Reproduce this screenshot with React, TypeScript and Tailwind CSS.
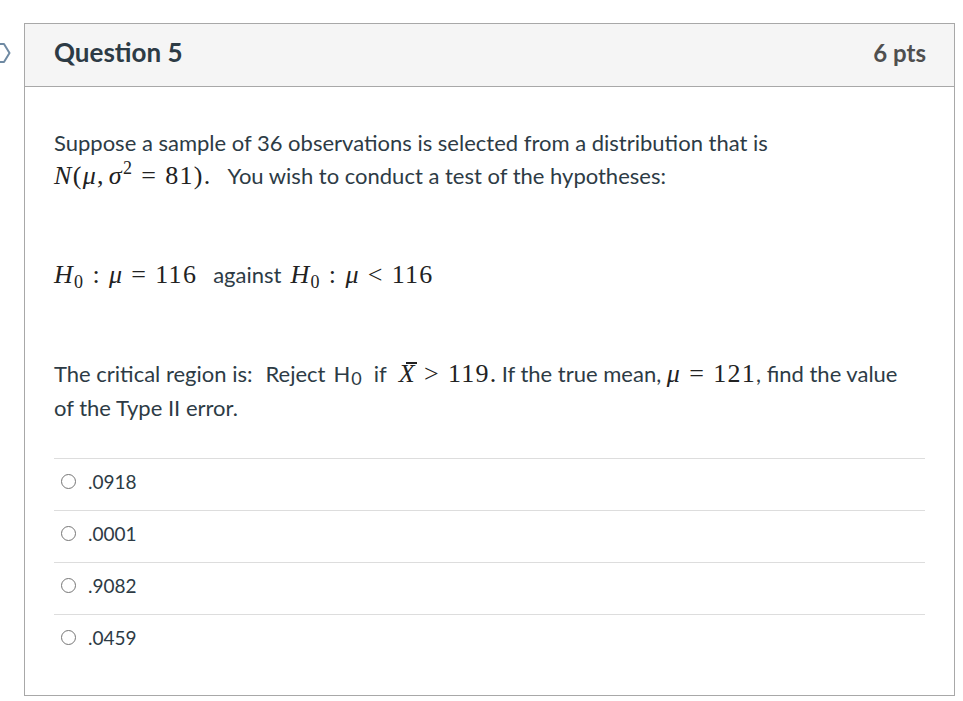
import React from "react";

const M: React.FC<{ children: React.ReactNode; className?: string }> = ({ children, className }) => (
  <span className={`font-['Liberation_Serif',serif] text-[26px] tracking-[1.3px] text-[#222] ${className ?? ""}`}>{children}</span>
);
const I: React.FC<{ children: React.ReactNode }> = ({ children }) => <i className="italic">{children}</i>;
const S: React.FC<{ w: string }> = ({ w }) => <span className={`inline-block ${w}`} />;

const answers = [".0918", ".0001", ".9082", ".0459"];

export default function App() {
  return (
    <div className="relative w-[963px] h-[701px] bg-white font-['Lato',sans-serif] text-[#2d3b45]">
      <svg className="absolute left-[-6px] top-[41px]" width="18" height="24" viewBox="0 0 18 24">
        <path d="M1 3 H10 L15.5 12 L10 21 H1" fill="none" stroke="#6f8aa3" strokeWidth="2" strokeLinejoin="round" />
      </svg>
      <div className="absolute left-[24px] top-[23px] w-[931px] h-[673px] border border-[#a8a8a8] flex flex-col">
        <div className="h-[63px] shrink-0 bg-[#f5f5f5] border-b border-[#a8a8a8] flex items-center justify-between pl-[29px] pr-[28px] pb-[5px]">
          <span className="text-[26px] font-bold text-[#2d3b45]">Question 5</span>
          <span className="text-[24px] font-bold text-[#4f4f4f]">6 pts</span>
        </div>
        <div className="px-[29px] pt-[39px] text-[22px] leading-[33px]">
          <p>Suppose a sample of 36 observations is selected from a distribution that is</p>
          <p>
            <M>
              <I>N</I>(<I>μ</I>,<S w="w-[4px]" /><I>σ</I>
              <sup className="text-[18px] relative top-[-10px] align-baseline">2</sup>
              <S w="w-[8px]" />=<S w="w-[8px]" />81).
            </M>
            <S w="w-[16px]" />You wish to conduct a test of the hypotheses:
          </p>
          <p>&nbsp;</p>
          <p className="mt-[33px]">
            <M>
              <I>H</I>
              <sub className="text-[18px]">0</sub>
              <S w="w-[8px]" />:<S w="w-[8px]" /><I>μ</I>
              <S w="w-[8px]" />=<S w="w-[8px]" />116
            </M>
            <S w="w-[16px]" />against<S w="w-[9px]" />
            <M>
              <I>H</I>
              <sub className="text-[18px]">0</sub>
              <S w="w-[8px]" />:<S w="w-[8px]" /><I>μ</I>
              <S w="w-[8px]" />&lt;<S w="w-[8px]" />116
            </M>
          </p>
          <p>&nbsp;</p>
          <p className="mt-[33px] leading-[34px]">
            The critical region is:<S w="w-[13px]" />Reject<S w="w-[8px]" />H
            <sub className="text-[18px] relative top-[3px] align-baseline ml-[1px]">0</sub>
            <S w="w-[12px]" />if<S w="w-[12px]" />
            <M>
              <span className="relative inline-block">
                <I>X</I>
                <span className="absolute left-[7px] top-[5px] w-[11px] h-[1.5px] bg-[#222]" />
              </span>
              <S w="w-[8px]" />&gt;<S w="w-[8px]" />119.
            </M>
            <S w="w-[4px]" />If the true mean,{" "}
            <M>
              <I>μ</I>
              <S w="w-[8px]" />=<S w="w-[8px]" />121
            </M>
            , find the value
            <br />
            of the Type II error.
          </p>
          <div className="mt-[33px]">
            {answers.map((a) => (
              <div key={a} className="h-[52px] border-t border-[#dddddd] flex items-center pb-[6px]">
                <span className="ml-[7px] w-[15px] h-[15px] rounded-full border border-[#767676] bg-white" />
                <span className="ml-[12px] text-[19px] text-[#2d3b45]">{a}</span>
              </div>
            ))}
          </div>
        </div>
      </div>
    </div>
  );
}
